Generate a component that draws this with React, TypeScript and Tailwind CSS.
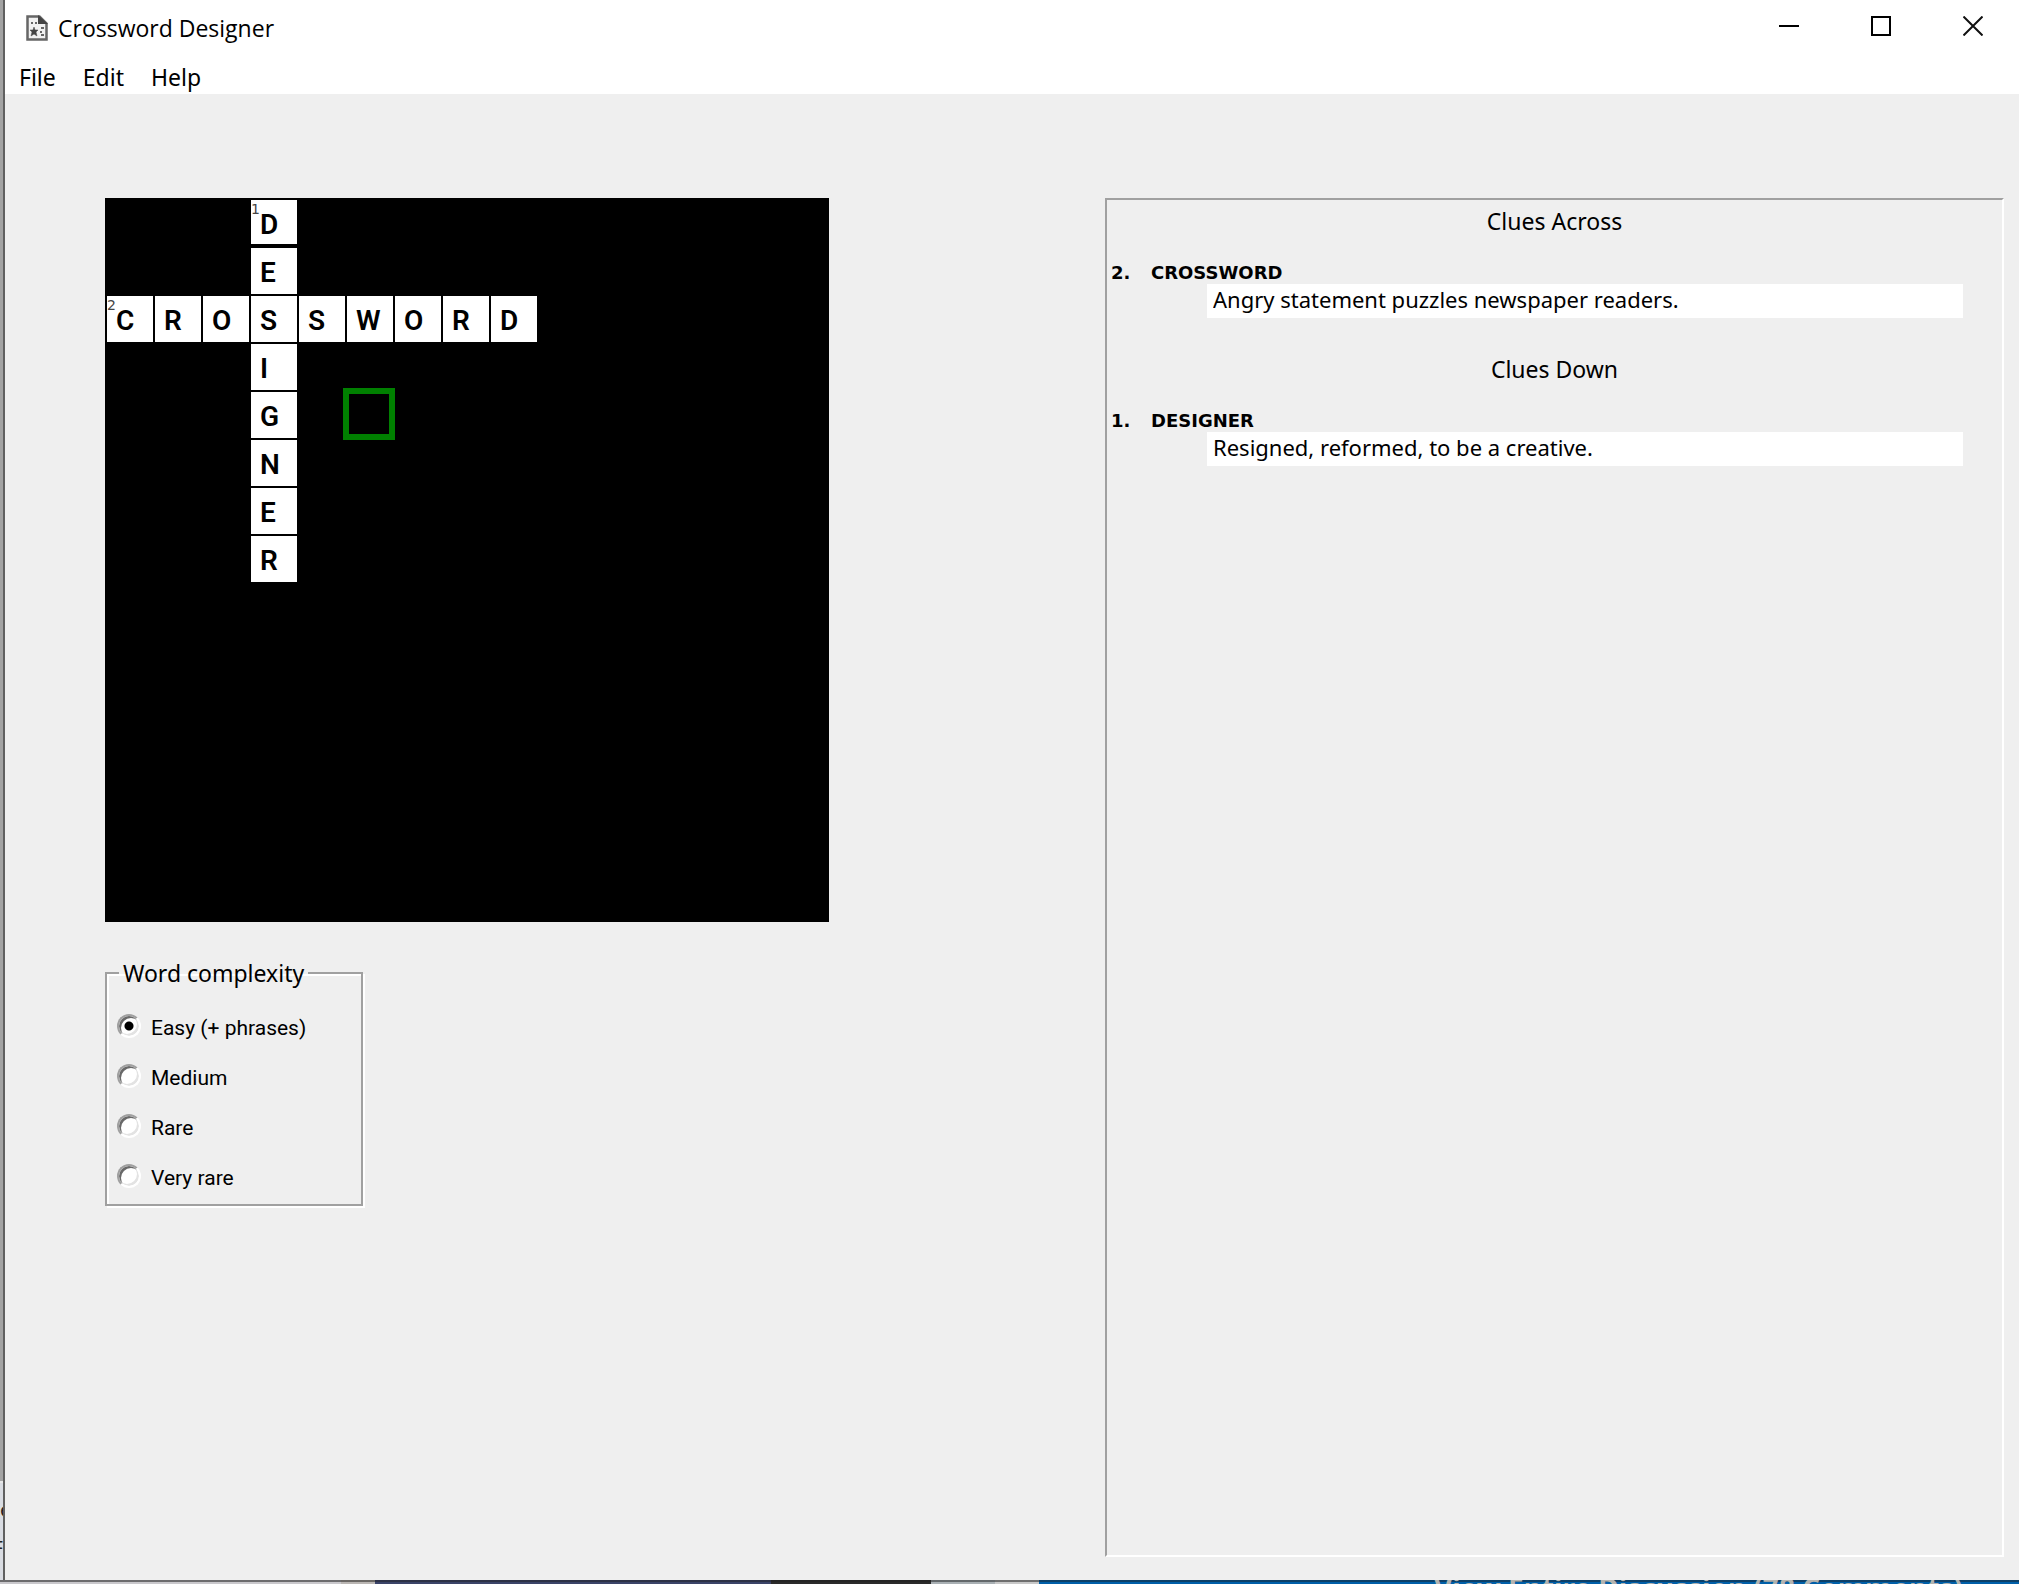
import { useState } from "react";

const SIZE = 15;
const words = [
  { number: 1, answer: "DESIGNER", row: 0, col: 3, down: true },
  { number: 2, answer: "CROSSWORD", row: 2, col: 0, down: false },
];

type Cell = { letter?: string; number?: number };

function buildGrid(): Cell[] {
  const cells: Cell[] = Array.from({ length: SIZE * SIZE }, () => ({}));
  for (const w of words) {
    [...w.answer].forEach((letter, i) => {
      const cell = cells[(w.row + (w.down ? i : 0)) * SIZE + w.col + (w.down ? 0 : i)];
      cell.letter = letter;
      if (i === 0) cell.number = w.number;
    });
  }
  return cells;
}

const grid = buildGrid();
const cursor = 4 * SIZE + 5;

function AppIcon() {
  return (
    <svg width="22" height="26" viewBox="0 0 22 26" aria-hidden="true">
      <path d="M1.500 1.500h12l7 7v16h-19z" fill="#f1f1f1" stroke="#666" strokeWidth="2.500" />
      <path d="M12 0l10 9h-10z" fill="#444" />
      <g fill="#666">
        <rect x="5" y="7" width="2" height="2" />
        <rect x="9" y="7" width="2" height="2" />
        <rect x="15" y="12" width="3" height="2" />
        <rect x="15" y="19" width="3" height="2" />
        <rect x="14" y="16" width="2" height="2" />
      </g>
      <path d="M8 12l1 3h3l-2 2 1 4-3-2-3 2 1-4-2-2h3z" fill="#444" stroke="#444" strokeWidth=".5" />
    </svg>
  );
}

function TitleBar() {
  return (
    <header className="flex h-14 items-center bg-white pl-[21px]">
      <AppIcon />
      <h1 className="grow pl-[10px] font-['Open_Sans','Noto_Sans',sans-serif] text-[23px] leading-8">Crossword Designer</h1>
      <div className="flex self-start">
        <button aria-label="Minimize" className="flex h-[52px] w-[92px] items-center justify-center">
          <svg width="20" height="20" viewBox="0 0 20 20"><path d="M0 10h20" stroke="#000" strokeWidth="2" /></svg>
        </button>
        <button aria-label="Maximize" className="flex h-[52px] w-[92px] items-center justify-center">
          <svg width="20" height="20" viewBox="0 0 20 20"><rect x="1" y="1" width="18" height="18" fill="none" stroke="#000" strokeWidth="2" /></svg>
        </button>
        <button aria-label="Close" className="flex h-[52px] w-[92px] items-center justify-center">
          <svg width="20" height="20" viewBox="0 0 20 20"><path d="M.5 .5l19 19M19.500 .5l-19 19" stroke="#111" strokeWidth="2" /></svg>
        </button>
      </div>
    </header>
  );
}

function MenuBar() {
  return (
    <nav className="flex h-[38px] gap-[27px] bg-white pl-[14px] font-['Noto_Sans',sans-serif] text-[23px] leading-[42px]">
      {["File", "Edit", "Help"].map((m) => (
        <button key={m} className="h-[38px]">{m}</button>
      ))}
    </nav>
  );
}

function Board() {
  return (
    <div className="grid w-max auto-rows-[48px] grid-cols-[repeat(15,48px)] bg-black p-[2px]">
      {grid.map((cell, i) => (
        <div key={i} className="relative">
          {cell.letter && (
            <div className={`w-[46px] bg-white pl-[9px] font-[Roboto,sans-serif] text-[28px] leading-[50px] font-semibold ${i < SIZE ? "h-[44px]" : "h-[46px]"}`}>
              {cell.letter}
            </div>
          )}
          {cell.number && (
            <span className="absolute top-0 left-0 font-['DejaVu_Sans',sans-serif] text-[14px] leading-[18px] text-[#444]">{cell.number}</span>
          )}
          {i === cursor && <div className="absolute -top-1 -left-1 size-[52px] border-[6px] border-[#008000]" />}
        </div>
      ))}
    </div>
  );
}

function Complexity() {
  const [level, setLevel] = useState("Easy (+ phrases)");
  return (
    <fieldset className="mt-[39px] w-[258px] border-2 border-[#a0a0a0] pb-[3px] pl-[10px] shadow-[2px_2px_0_#fff,inset_2px_2px_0_#fff]">
      <legend className="ml-[2px] px-1 font-['Noto_Sans',sans-serif] text-[23px] leading-6">Word complexity</legend>
      <div className="flex flex-col pt-4">
        {["Easy (+ phrases)", "Medium", "Rare", "Very rare"].map((l) => (
          <label key={l} className="flex h-[50px] items-center gap-[10px] font-[Roboto,sans-serif] text-[21px] leading-8">
            <input
              type="radio"
              name="complexity"
              checked={level === l}
              onChange={() => setLevel(l)}
              className="size-6 appearance-none rounded-full border-2 border-t-[#a0a0a0] border-r-white border-b-white border-l-[#a0a0a0] bg-white shadow-[inset_2px_2px_0_#696969,inset_-2px_-2px_0_#e3e3e3] checked:bg-[radial-gradient(circle,#000_4px,#fff_5px)]"
            />
            <span className="pt-[3px]">{l}</span>
          </label>
        ))}
      </div>
    </fieldset>
  );
}

function Clues({ title, number, answer, text }: { title: string; number: number; answer: string; text: string }) {
  const id = `clue-${number}`;
  return (
    <section className="h-[148px] font-['Noto_Sans',sans-serif]">
      <h2 className="pt-1 text-center text-[23px] leading-[34px]">{title}</h2>
      <label htmlFor={id} className="flex pt-[23px] pl-1 font-['DejaVu_Sans',sans-serif] text-[18px] leading-[23px] font-bold">
        <span className="w-10">{number}.</span>
        {answer}
      </label>
      <div className="pr-[39px] pl-[100px]">
        <input id={id} defaultValue={text} className="block h-[34px] w-full bg-white px-[6px] pb-1 text-[22px] outline-none" />
      </div>
    </section>
  );
}

function BackgroundEdge() {
  return (
    <div className="flex w-[3px] flex-col overflow-hidden bg-[#a3a3a3]">
      <div className="grow" />
      <div className="h-[99px] border-t-2 border-[#e8e8e8] bg-[#d9dce2] pt-2 font-['Noto_Sans',sans-serif] text-[20px] leading-[38px] text-[#222]">
        <div className="flex">e</div>
        <div className="flex justify-end">F</div>
      </div>
    </div>
  );
}

function BackgroundStrip() {
  return (
    <div className="flex h-1 overflow-hidden">
      <div className="h-1 w-[341px] overflow-hidden border-t-2 border-[#6c6c6e] bg-[#c9c8cc] pl-[3px] font-['Noto_Sans',sans-serif] text-[20px] leading-3 text-[#222]">num</div>
      <div className="w-[34px] border-t-2 border-[#6a6764] bg-[#bab6b3]" />
      <div className="w-[396px] border-t-2 border-[#2c3146] bg-[#3a4368]" />
      <div className="w-40 border-t-2 border-[#242424] bg-[#2a2a2a]" />
      <div className="w-16 border-t-2 border-[#63686b] bg-[#a9b0b4]" />
      <div className="w-11 border-t-2 border-[#6f6f6f] bg-[#c8c8c8]" />
      <div className="h-1 grow overflow-hidden bg-linear-to-b from-[#0d4068] from-50% to-[#005fa8] to-50% pl-[395px] font-['Noto_Sans',sans-serif] text-[28px] leading-4 font-bold whitespace-nowrap text-[#b4b4b0]">
        View Entire Discussion (78 Comments)
      </div>
    </div>
  );
}

export default function App() {
  return (
    <div className="flex min-h-screen flex-col text-black">
      <div className="flex grow">
        <BackgroundEdge />
        <div className="flex grow flex-col border-l-2 border-[#606060] bg-[#efefef]">
          <TitleBar />
          <MenuBar />
          <main className="flex grow justify-between pt-[104px] pr-[15px] pb-[23px] pl-[100px]">
            <div>
              <Board />
              <Complexity />
            </div>
            <div className="w-[899px] border-2 border-t-[#a0a0a0] border-r-white border-b-white border-l-[#a0a0a0]">
              <Clues title="Clues Across" number={2} answer="CROSSWORD" text="Angry statement puzzles newspaper readers." />
              <Clues title="Clues Down" number={1} answer="DESIGNER" text="Resigned, reformed, to be a creative." />
            </div>
          </main>
        </div>
      </div>
      <BackgroundStrip />
    </div>
  );
}
